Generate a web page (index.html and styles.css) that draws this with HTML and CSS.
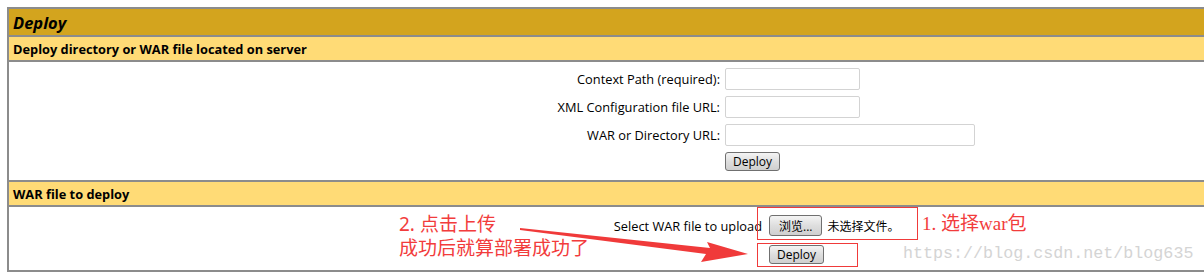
FILE: index.html
```html
<!DOCTYPE html>
<html lang="zh-CN">
<head>
    <meta charset="UTF-8">
    <title>Tomcat Manager - Deploy</title>
    <link rel="stylesheet" href="styles.css">
</head>
<body>
    <table class="deploy">
        <tr><td class="title">Deploy</td></tr>
        <tr><td class="subtitle">Deploy directory or WAR file located on server</td></tr>
        <tr>
            <td class="body-cell">
                <form class="form-grid server-form">
                    <label for="path">Context Path (required):</label>
                    <input type="text" id="path" class="short">
                    <label for="config">XML Configuration file URL:</label>
                    <input type="text" id="config" class="short">
                    <label for="war">WAR or Directory URL:</label>
                    <input type="text" id="war" class="long">
                    <span></span>
                    <div><button type="button" class="btn">Deploy</button></div>
                </form>
            </td>
        </tr>
        <tr><td class="subtitle">WAR file to deploy</td></tr>
        <tr>
            <td class="body-cell">
                <form class="form-grid upload-form">
                    <label>Select WAR file to upload</label>
                    <div class="file-pick">
                        <button type="button" class="btn">浏览...</button>
                        <span class="file-name">未选择文件。</span>
                    </div>
                    <span></span>
                    <div><button type="button" class="btn">Deploy</button></div>
                </form>
            </td>
        </tr>
    </table>

    <!-- annotations drawn on top of the screenshot -->
    <div class="note note-upload">2. 点击上传<br>成功后就算部署成功了</div>
    <div class="note note-choose">1. 选择war包</div>
    <div class="mark box-file"></div>
    <div class="mark box-deploy"></div>
    <svg class="arrow" width="240" height="40" viewBox="0 0 240 40">
        <polygon points="0,1 190,21 187,15 228,27 181,35 186,27 0,3" fill="#f03a3a"/>
    </svg>
    <div class="watermark">https://blog.csdn.net/blog635</div>
</body>
</html>
```

FILE: styles.css
```css
body {
    margin: 0;
    padding: 7px 0 0 7px;
    overflow: hidden;
    font-family: "Open Sans", "Noto Sans", sans-serif;
    font-size: 12.8px;
    color: #000;
    background: #fff;
}

.deploy {
    width: 1230px;
    border-collapse: collapse;
}

.deploy td {
    border: 2px solid #8c8c8c;
    padding: 0 4px;
}

.title {
    background-color: #d3a41e;
    height: 26px;
    font-size: 16.5px;
    font-weight: bold;
    font-style: italic;
}

.subtitle {
    background-color: #ffdb76;
    height: 23px;
    font-weight: bold;
}

.deploy td.body-cell {
    padding: 0;
}

.form-grid {
    display: grid;
    grid-template-columns: 711px auto;
    column-gap: 5px;
    align-items: center;
    margin: 0;
}

.server-form {
    padding: 6px 0 9px;
    row-gap: 6px;
}

.upload-form {
    grid-template-columns: 753px auto;
    column-gap: 7px;
    padding: 8px 0 6px;
    row-gap: 9px;
}

.form-grid label {
    text-align: right;
}

input {
    height: 22px;
    box-sizing: border-box;
    border: 1px solid #d3d3d3;
    border-radius: 2px;
    padding: 0 3px;
    font: inherit;
}

.short {
    width: 135px;
}

.long {
    width: 250px;
}

.btn {
    height: 19px;
    padding: 0 7px;
    border: 1px solid #707070;
    border-radius: 3px;
    background: linear-gradient(#f4f4f4, #dedede 50%, #cfcfcf);
    font: inherit;
    font-size: 12px;
    color: #000;
}

.file-pick {
    display: flex;
    align-items: center;
    gap: 5px;
}

.file-pick .btn {
    height: 21px;
    padding: 0 9px;
}

.file-name {
    font-family: "Noto Sans CJK SC", sans-serif;
    font-size: 12px;
}

.note {
    position: absolute;
    color: #f23c3c;
    font-family: "Noto Sans", "Noto Sans CJK SC", sans-serif;
    font-size: 19px;
    line-height: 24px;
}

.note-upload {
    left: 399px;
    top: 212px;
}

.note-choose {
    left: 922px;
    top: 212px;
    font-family: "Liberation Serif", "Noto Sans CJK SC", serif;
}

.mark {
    position: absolute;
    border: 1px solid #f03a3a;
}

.box-file {
    left: 757px;
    top: 207px;
    width: 159px;
    height: 31px;
}

.box-deploy {
    left: 757px;
    top: 243px;
    width: 99px;
    height: 22px;
}

.arrow {
    position: absolute;
    left: 520px;
    top: 227px;
}

.watermark {
    position: absolute;
    left: 903px;
    top: 244px;
    color: #d4d4d4;
    font-family: "Liberation Mono", monospace;
    font-size: 16.7px;
}
```
